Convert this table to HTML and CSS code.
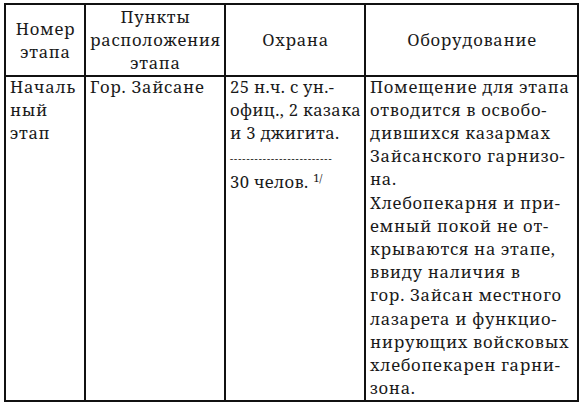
FILE: index.html
```html
<!DOCTYPE html>
<html lang="ru">
<head>
<meta charset="utf-8">
<link rel="stylesheet" href="styles.css">
</head>
<body>
<table class="stages">
  <colgroup>
    <col class="c-num">
    <col class="c-place">
    <col class="c-guard">
    <col class="c-equip">
  </colgroup>
  <thead>
    <tr>
      <th>Номер<br>этапа</th>
      <th>Пункты<br>расположения<br>этапа</th>
      <th>Охрана</th>
      <th>Оборудование</th>
    </tr>
  </thead>
  <tbody>
    <tr>
      <td><div class="cell">Началь<br>ный<br>этап</div></td>
      <td><div class="cell">Гор. Зайсане</div></td>
      <td class="guard"><div class="cell">25 н.ч. с ун.-<br>офиц., 2 казака<br>и 3 джигита.<br><span class="dashes">-------------------------</span><br>30 челов. <sup class="note">1/</sup></div></td>
      <td><div class="cell">Помещение для этапа<br>отводится в освобо-<br>дившихся казармах<br>Зайсанского гарнизо-<br>на.<br>Хлебопекарня и при-<br>емный покой не от-<br>крываются на этапе,<br>ввиду наличия в<br>гор. Зайсан местного<br>лазарета и функцио-<br>нирующих войсковых<br>хлебопекарен гарни-<br>зона.</div></td>
    </tr>
  </tbody>
</table>
</body>
</html>
```

FILE: styles.css
```css
html, body {
  margin: 0;
  padding: 0;
  background: #fff;
}

body {
  padding: 3px 0 0 4px;
  font-family: "Noto Serif", "DejaVu Serif", serif;
  color: #1a1a1a;
}

.stages {
  border-collapse: collapse;
  table-layout: fixed;
  width: 573px;
  font-size: 16.6px;
  line-height: 23.2px;
  letter-spacing: 0.7px;
}

.c-num { width: 80px; }
.c-place { width: 140px; }
.c-guard { width: 140px; }
.c-equip { width: 213px; }

.stages th,
.stages td {
  border: 2px solid #111;
  padding: 0 3px 0 4px;
  white-space: nowrap;
}

.stages th {
  font-weight: normal;
  text-align: center;
  vertical-align: middle;
  height: 66px;
}

.stages td {
  text-align: left;
  vertical-align: top;
  padding-top: 0;
  padding-bottom: 1px;
}

.cell {
  margin-top: -2px;
}

.guard {
  letter-spacing: 0.35px;
}

.dashes {
  font-size: 10px;
  letter-spacing: 1px;
}

.note {
  font-size: 11px;
  line-height: 0;
  letter-spacing: 0;
  vertical-align: 6px;
}
```
